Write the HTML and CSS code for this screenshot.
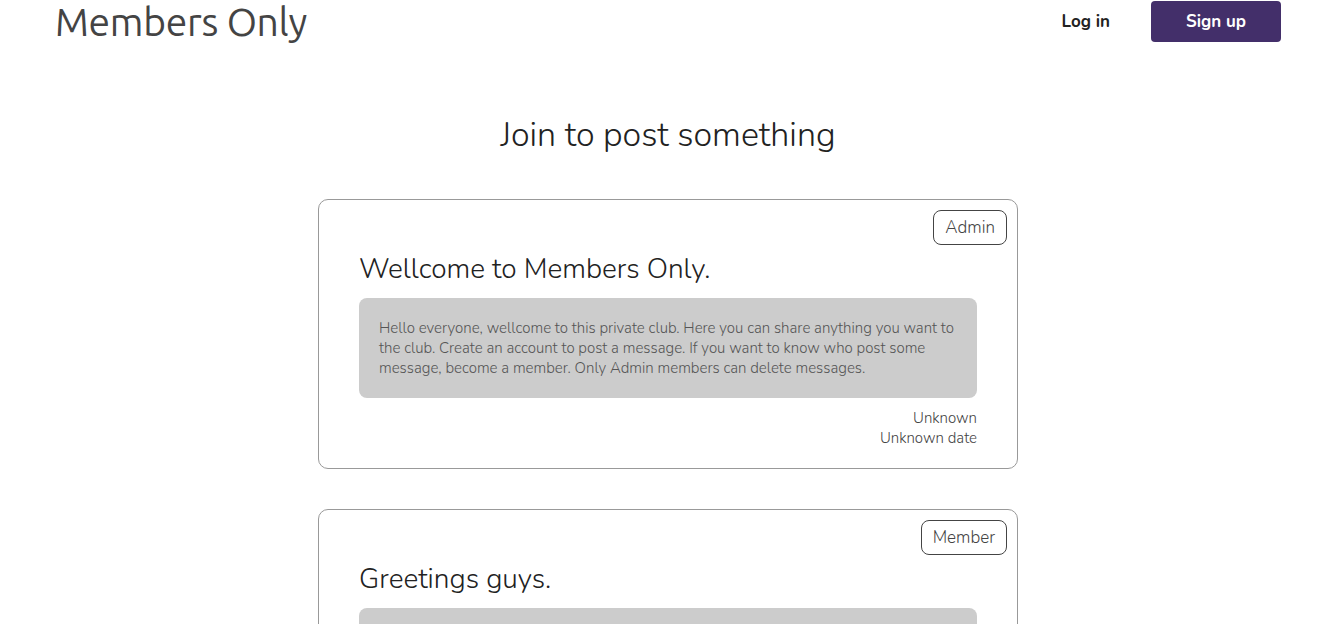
FILE: index.html
```html
<!DOCTYPE html>
<html lang="en">
<head>
<meta charset="utf-8">
<title>Members Only</title>
<link rel="stylesheet" href="styles.css">
</head>
<body>
<header class="topbar">
  <a class="brand" href="#">Members Only</a>
  <nav class="nav">
    <a class="nav-link" href="#">Log in</a>
    <a class="btn-signup" href="#">Sign up</a>
  </nav>
</header>
<main class="main">
  <h1 class="page-title">Join to post something</h1>
  <section class="posts">
    <article class="card">
      <div class="badge-row"><span class="badge">Admin</span></div>
      <h2 class="card-title">Wellcome to Members Only.</h2>
      <div class="card-body">Hello everyone, wellcome to this private club. Here you can share anything you want to the club. Create an account to post a message. If you want to know who post some message, become a member. Only Admin members can delete messages.</div>
      <div class="card-meta">
        <span>Unknown</span>
        <span>Unknown date</span>
      </div>
    </article>
    <article class="card">
      <div class="badge-row"><span class="badge">Member</span></div>
      <h2 class="card-title">Greetings guys.</h2>
      <div class="card-body">Hi everyone! Nice to be part of this club. Looking forward to reading your messages.</div>
      <div class="card-meta">
        <span>Unknown</span>
        <span>Unknown date</span>
      </div>
    </article>
  </section>
</main>
</body>
</html>
```
FILE: styles.css
```css
* { box-sizing: border-box; }
html, body { margin: 0; padding: 0; background: #fff; }
body {
  font-family: Nunito, Lato, "Open Sans", sans-serif;
  color: #222;
}
a { text-decoration: none; }
.topbar {
  display: flex;
  justify-content: space-between;
  align-items: center;
  padding: 0 55px;
  height: 43px;
}
.brand {
  font-family: Ubuntu, "Open Sans", "DejaVu Sans", sans-serif;
  font-size: 39px;
  color: #444;
  letter-spacing: -0.3px;
}
.nav {
  display: flex;
  align-items: center;
  gap: 41px;
}
.nav-link {
  font-weight: 700;
  font-size: 17px;
  color: #222;
}
.btn-signup {
  display: flex;
  align-items: center;
  justify-content: center;
  width: 130px;
  height: 41px;
  background: #432f6a;
  color: #fff;
  font-weight: 700;
  font-size: 17px;
  border-radius: 4px;
}
.main {
  display: flex;
  flex-direction: column;
  align-items: center;
}
.page-title {
  margin: 68px 0 0 0;
  font-weight: 300;
  font-size: 34px;
  line-height: 48px;
  color: #222;
}
.posts {
  margin-top: 40px;
  display: flex;
  flex-direction: column;
  gap: 40px;
}
.card {
  width: 700px;
  border: 1px solid #999;
  border-radius: 10px;
  padding: 10px 10px 20px 40px;
}
.badge-row {
  display: flex;
  justify-content: flex-end;
}
.badge {
  border: 1px solid #444;
  border-radius: 8px;
  padding: 0 11px;
  height: 35px;
  line-height: 33px;
  font-size: 17px;
  font-weight: 300;
  color: #444;
}
.card-title {
  margin: 4px 0 0 0;
  font-weight: 300;
  font-size: 28px;
  line-height: 40px;
  color: #222;
}
.card-body {
  margin-top: 9px;
  width: 618px;
  background: #ccc;
  border-radius: 8px;
  padding: 20px;
  font-size: 15px;
  font-weight: 300;
  line-height: 20px;
  color: #555;
}
.card-meta {
  width: 618px;
  margin-top: 10px;
  display: flex;
  flex-direction: column;
  align-items: flex-end;
  font-size: 15px;
  font-weight: 300;
  line-height: 20px;
  color: #444;
}
```
